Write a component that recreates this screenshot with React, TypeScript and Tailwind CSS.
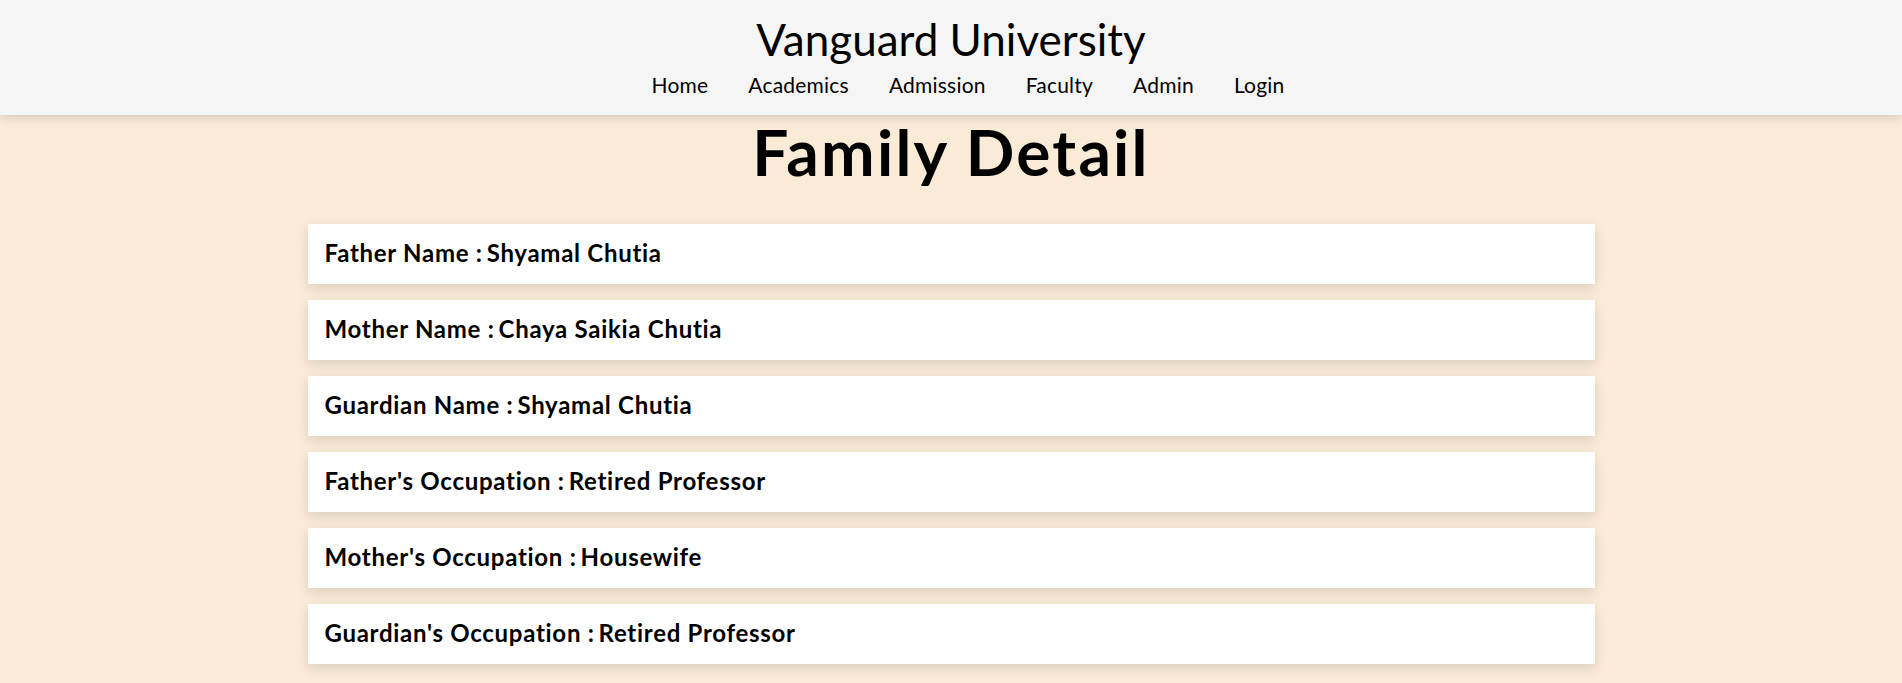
const navLinks = ["Home", "Academics", "Admission", "Faculty", "Admin", "Login"];

const family = [
  { label: "Father Name", value: "Shyamal Chutia" },
  { label: "Mother Name", value: "Chaya Saikia Chutia" },
  { label: "Guardian Name", value: "Shyamal Chutia" },
  { label: "Father's Occupation", value: "Retired Professor" },
  { label: "Mother's Occupation", value: "Housewife" },
  { label: "Guardian's Occupation", value: "Retired Professor" },
];

export default function App() {
  return (
    <div
      className="min-h-[683px] bg-[#faebd7] text-black"
      style={{ fontFamily: "Lato, 'Open Sans', sans-serif" }}
    >
      <header className="relative z-10 flex h-[115px] flex-col items-center bg-[#f5f5f5] pt-[13px] shadow-[0_2px_10px_rgba(0,0,0,0.15)]">
        <h1 className="text-[44px] leading-[1.2] font-normal">Vanguard University</h1>
        <nav className="mt-[6px] flex gap-[40px] pl-[34px] text-[21px] leading-[1.2] tracking-[0.01em]">
          {navLinks.map((link) => (
            <a key={link} href="#" className="text-black">
              {link}
            </a>
          ))}
        </nav>
      </header>

      <main className="flex flex-col items-center pb-5">
        <h2 className="-mt-px text-[64px] leading-[1.2] font-bold tracking-[0.035em]">
          Family Detail
        </h2>
        <div className="mt-[33px] flex w-[1287px] flex-col gap-4">
          {family.map((item) => (
            <div
              key={item.label}
              className="flex h-[60px] items-center bg-white px-[17px] text-[24px] leading-[1.2] font-bold tracking-[0.03em] shadow-[0_4px_12px_rgba(0,0,0,0.12)]"
            >
              <span>{item.label} :</span>
              <span className="ml-[4px]">{item.value}</span>
            </div>
          ))}
        </div>
      </main>
    </div>
  );
}
